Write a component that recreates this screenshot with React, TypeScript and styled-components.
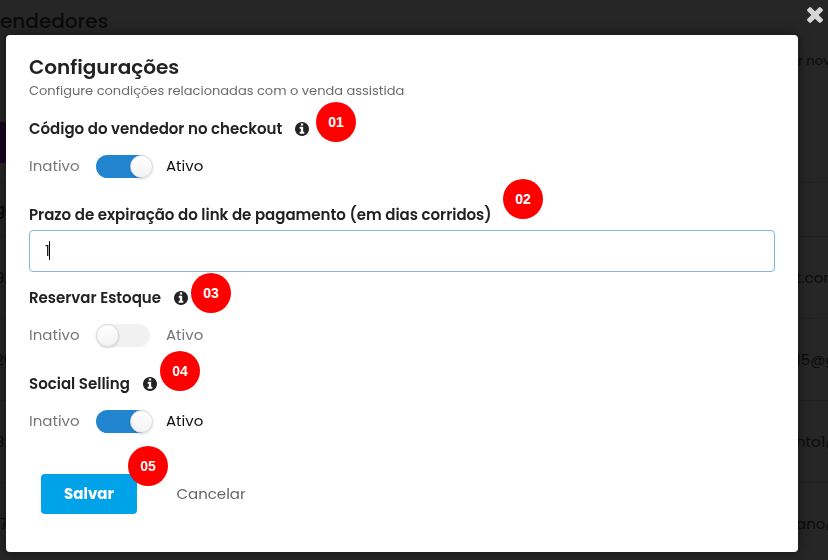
import React, { useState } from "react";
import styled, { createGlobalStyle } from "styled-components";

const GlobalStyle = createGlobalStyle`
  *, *::before, *::after { box-sizing: border-box; }
  html, body, #root { height: 100%; }
  body {
    margin: 0;
    overflow: hidden;
    background: #262626;
    font-family: Poppins, Inter, "Open Sans", sans-serif;
  }
`;

const Page = styled.main`
  height: 100%;
  overflow: hidden;
  color: #0b0b0b;
`;

const PageTitle = styled.h1`
  margin: 0;
  height: 42px;
  font-size: 20px;
  line-height: 42px;
  font-weight: 500;
`;

const PageIntro = styled.p`
  margin: 0;
  height: 80px;
  padding-top: 9px;
  display: grid;
  grid-template-columns: 1fr 30px;
  font-size: 13px;
  line-height: 20px;
  white-space: nowrap;
`;

const PageAction = styled.div`
  width: 96px;
  height: 41px;
  margin-bottom: 19px;
  background: #190421;
`;

const PageTable = styled.table`
  width: 100%;
  table-layout: fixed;
  border-collapse: collapse;
  font-size: 15px;
  white-space: nowrap;

  th,
  td {
    padding: 0;
    border-top: 1px solid #212121;
    text-align: left;
  }
  th {
    height: 54px;
    font-weight: 600;
  }
  td {
    height: 82px;
  }
  th:first-child,
  td:first-child {
    text-indent: -5px;
  }
  th:last-child,
  td:last-child {
    width: 32px;
  }
`;

const Overlay = styled.div`
  position: fixed;
  inset: 0;
  padding: 35px 30px 8px 6px;
`;

const Dialog = styled.section`
  position: relative;
  min-height: 100%;
  padding: 20px 23px 38px;
  border-radius: 4px;
  background: #fff;
  box-shadow: 0 0 12px rgba(0, 0, 0, 0.5);
  color: #222;
`;

const CloseButton = styled.button`
  position: absolute;
  top: 7px;
  right: 5px;
  width: 16px;
  height: 16px;
  padding: 0;
  border: 0;
  background: none;
  color: #d6d6d6;
  cursor: pointer;

  svg {
    display: block;
    width: 100%;
    height: 100%;
    fill: currentColor;
  }
`;

const Title = styled.h2`
  margin: 0;
  font-size: 20px;
  line-height: 24px;
  font-weight: 600;
`;

const Subtitle = styled.p`
  margin: 0;
  color: #6b6b6b;
  font-size: 13px;
  line-height: 24px;
`;

const Field = styled.div`
  padding-top: 14px;
  height: 86px;
`;

const FieldHead = styled.div`
  display: flex;
  align-items: center;
  gap: 13px;
  height: 24px;
`;

const FieldLabel = styled.label`
  font-size: 15px;
  line-height: 24px;
  font-weight: 600;
  white-space: nowrap;
`;

const InfoIcon = styled.svg`
  width: 14px;
  height: 14px;
  fill: #222;
`;

const SwitchRow = styled.div`
  display: grid;
  grid-template-columns: 67px 54px auto;
  align-items: center;
  height: 24px;
  margin-top: 13px;
  font-size: 15px;
  line-height: 24px;
`;

const StateText = styled.span<{ $active?: boolean }>`
  color: ${(p) => (p.$active ? "#111" : "#777")};
`;

const OnText = styled(StateText)`
  padding-left: 16px;
`;

const Switch = styled.input`
  appearance: none;
  width: 54px;
  height: 23px;
  margin: 0;
  border-radius: 12px;
  background: #f1f1f1;
  cursor: pointer;

  &::before {
    content: "";
    display: block;
    width: 23px;
    height: 23px;
    border: 1px solid #d9d9d9;
    border-radius: 50%;
    background: linear-gradient(#fff, #f3f3f3);
    box-shadow: 0 1px 2px rgba(34, 36, 38, 0.18);
  }
  &:checked {
    background: #2185d0;
  }
  &:checked::before {
    margin-left: 34px;
  }
`;

const TextField = styled.div`
  padding-top: 14px;
  height: 83px;
`;

const InputBox = styled.div`
  position: relative;
  margin-top: 3px;
`;

const TextInput = styled.input`
  display: block;
  width: 100%;
  height: 42px;
  padding: 0 15px 2px;
  border: 1px solid #85b7d9;
  border-radius: 4px;
  outline: 0;
  background: #fff;
  color: #222;
  font-family: inherit;
  font-size: 15px;
`;

const Caret = styled.span`
  position: absolute;
  top: 11px;
  left: 20px;
  width: 1px;
  height: 19px;
  background: #000;
`;

const Actions = styled.div`
  display: flex;
  align-items: center;
  gap: 26px;
  padding: 30px 12px 0;
`;

const Button = styled.button<{ $primary?: boolean }>`
  height: 40px;
  padding: 0 0 2px;
  width: 96px;
  border: 0;
  border-radius: 4px;
  background: ${(p) => (p.$primary ? "#00a3e8" : "transparent")};
  color: ${(p) => (p.$primary ? "#fff" : "#666")};
  font-family: inherit;
  font-size: 15px;
  font-weight: ${(p) => (p.$primary ? 700 : 400)};
  cursor: pointer;
`;

const Marker = styled.span<{ $x: number; $y: number }>`
  position: absolute;
  left: ${(p) => p.$x}px;
  top: ${(p) => p.$y}px;
  display: grid;
  place-items: center;
  width: 40px;
  height: 40px;
  border-radius: 50%;
  background: #f00;
  color: #fff;
  font: 700 14px/20px "Liberation Sans", Arial, sans-serif;
`;

const rows = [
  ["92", "t.com"],
  ["20", "15@g"],
  ["82", "nto1@"],
  ["17", "ano@"],
];

const markers = [
  { text: "01", x: 310, y: 67 },
  { text: "02", x: 497, y: 144 },
  { text: "03", x: 185, y: 238 },
  { text: "04", x: 154, y: 316 },
  { text: "05", x: 122, y: 411 },
];

function Info() {
  return (
    <InfoIcon viewBox="128 128 1536 1536" aria-hidden="true">
      <path d="M1152 1376v-160q0-14-9-23t-23-9h-96v-512q0-14-9-23t-23-9h-320q-14 0-23 9t-9 23v160q0 14 9 23t23 9h96v320h-96q-14 0-23 9t-9 23v160q0 14 9 23t23 9h448q14 0 23-9t9-23zm-128-896v-160q0-14-9-23t-23-9h-192q-14 0-23 9t-9 23v160q0 14 9 23t23 9h192q14 0 23-9t9-23zm640 416q0 209-103 385.5t-279.5 279.5-385.5 103-385.5-103-279.5-279.5-103-385.5 103-385.5 279.5-279.5 385.5-103 385.5 103 279.5 279.5 103 385.5z" />
    </InfoIcon>
  );
}

function SwitchField({ id, label, initial }: { id: string; label: string; initial: boolean }) {
  const [on, setOn] = useState(initial);
  return (
    <Field>
      <FieldHead>
        <FieldLabel htmlFor={id}>{label}</FieldLabel>
        <Info />
      </FieldHead>
      <SwitchRow>
        <StateText>Inativo</StateText>
        <Switch id={id} type="checkbox" role="switch" checked={on} onChange={(e) => setOn(e.target.checked)} />
        <OnText $active={on}>Ativo</OnText>
      </SwitchRow>
    </Field>
  );
}

export default function App() {
  const [days, setDays] = useState("1");
  return (
    <>
      <GlobalStyle />
      <Page aria-hidden="true">
        <PageTitle>endedores</PageTitle>
        <PageIntro>
          <span />
          <span>r novo</span>
        </PageIntro>
        <PageAction />
        <PageTable>
          <thead>
            <tr>
              <th>go</th>
              <th />
            </tr>
          </thead>
          <tbody>
            {rows.map(([code, mail]) => (
              <tr key={code}>
                <td>{code}</td>
                <td>{mail}</td>
              </tr>
            ))}
          </tbody>
        </PageTable>
      </Page>
      <Overlay>
        <CloseButton type="button" aria-label="Fechar">
          <svg viewBox="302 366 1188 1188" aria-hidden="true">
            <path d="M1490 1322q0 40-28 68l-136 136q-28 28-68 28t-68-28l-294-294-294 294q-28 28-68 28t-68-28l-136-136q-28-28-28-68t28-68l294-294-294-294q-28-28-28-68t28-68l136-136q28-28 68-28t68 28l294 294 294-294q28-28 68-28t68 28l136 136q28 28 28 68t-28 68l-294 294 294 294q28 28 28 68z" />
          </svg>
        </CloseButton>
        <Dialog role="dialog" aria-labelledby="dialog-title">
          <Title id="dialog-title">Configurações</Title>
          <Subtitle>Configure condições relacionadas com o venda assistida</Subtitle>
          <SwitchField id="seller-code" label="Código do vendedor no checkout" initial />
          <TextField>
            <FieldHead>
              <FieldLabel htmlFor="expiry">Prazo de expiração do link de pagamento (em dias corridos)</FieldLabel>
            </FieldHead>
            <InputBox>
              <TextInput id="expiry" type="text" value={days} onChange={(e) => setDays(e.target.value)} />
              <Caret />
            </InputBox>
          </TextField>
          <SwitchField id="stock" label="Reservar Estoque" initial={false} />
          <SwitchField id="social" label="Social Selling" initial />
          <Actions>
            <Button type="button" $primary>
              Salvar
            </Button>
            <Button type="button">Cancelar</Button>
          </Actions>
          {markers.map((m) => (
            <Marker key={m.text} $x={m.x} $y={m.y}>
              {m.text}
            </Marker>
          ))}
        </Dialog>
      </Overlay>
    </>
  );
}
